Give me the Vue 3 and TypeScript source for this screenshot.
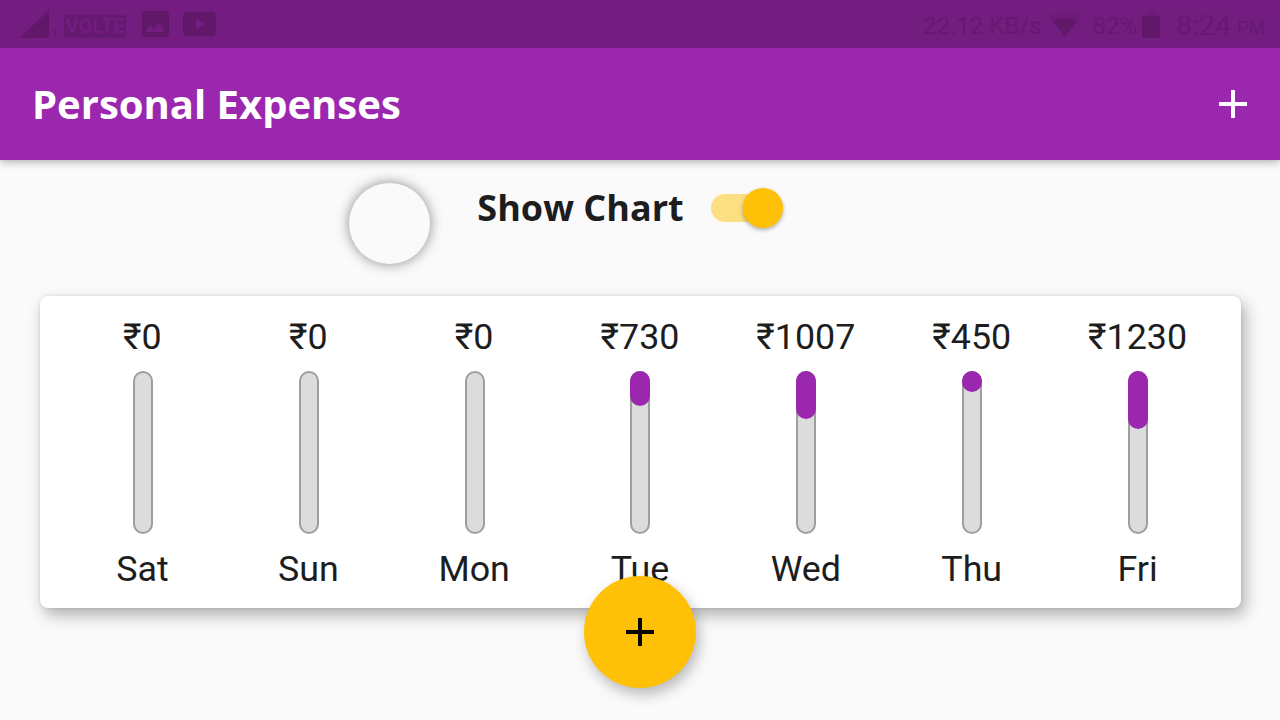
<script setup lang="ts">
import { ref } from 'vue'

interface DaySpending {
  day: string
  amount: number
  fill: number
}

const showChart = ref<boolean>(true)

const week: DaySpending[] = [
  { day: 'Sat', amount: 0, fill: 0 },
  { day: 'Sun', amount: 0, fill: 0 },
  { day: 'Mon', amount: 0, fill: 0 },
  { day: 'Tue', amount: 730, fill: 35 },
  { day: 'Wed', amount: 1007, fill: 48 },
  { day: 'Thu', amount: 450, fill: 21.5 },
  { day: 'Fri', amount: 1230, fill: 58.5 },
]
</script>

<template>
  <div class="screen">
    <div class="status">
      <div class="status-left">
        <svg class="signal" width="30" height="28" viewBox="0 0 30 28"><path d="M0 28 29 0V28Z" /></svg>
        <span class="tick"></span>
        <span class="volte">VOLTE</span>
        <svg class="photo" width="27" height="26" viewBox="0 0 27 26">
          <path fill-rule="evenodd" d="M3 0H24Q27 0 27 3V23Q27 26 24 26H3Q0 26 0 23V3Q0 0 3 0ZM3 21H23L17 11 12 18 8 14Z" />
        </svg>
        <svg class="video" width="33" height="24" viewBox="0 0 33 24">
          <path fill-rule="evenodd" d="M5 0H28Q33 0 33 5V19Q33 24 28 24H5Q0 24 0 19V5Q0 0 5 0ZM13 6V18L22 12Z" />
        </svg>
      </div>
      <div class="status-right">
        <span class="rate">22.12 KB/s</span>
        <svg class="wifi" width="32" height="26" viewBox="0 0 32 26">
          <path d="M0 6Q16-6 32 6L16 26Z" opacity=".35" />
          <path d="M4 10Q16 3 28 10L16 26Z" />
        </svg>
        <span class="percent">82%</span>
        <svg class="battery" width="18" height="27" viewBox="0 0 18 27">
          <path d="M5 0H13V4H18V27H0V4H5Z" opacity=".35" />
          <path d="M0 5H18V27H0Z" />
        </svg>
        <span class="clock">8:24</span>
        <span class="meridiem">PM</span>
      </div>
    </div>

    <header class="appbar">
      <h1>Personal Expenses</h1>
      <button class="add" aria-label="Add">
        <svg width="28" height="28" viewBox="0 0 28 28"><path d="M12 0H16V12H28V16H16V28H12V16H0V12H12Z" /></svg>
      </button>
    </header>

    <main>
      <div class="toggle-row">
        <span class="toggle-label">Show Chart</span>
        <button class="switch" aria-label="Toggle chart" @click="showChart = !showChart">
          <span class="track" :class="{ on: showChart }"><span class="thumb"></span></span>
        </button>
      </div>

      <section v-show="showChart" class="chart">
        <div v-for="d in week" :key="d.day" class="column">
          <span class="amount">₹{{ d.amount }}</span>
          <div class="bar"><div class="fill" :style="{ height: d.fill + 'px' }"></div></div>
          <span class="day">{{ d.day }}</span>
        </div>
      </section>
    </main>

    <div class="touch"></div>
    <button class="fab" aria-label="New expense">
      <svg width="28" height="28" viewBox="0 0 28 28"><path d="M12 0H16V12H28V16H16V28H12V16H0V12H12Z" /></svg>
    </button>
  </div>
</template>

<style>
body {
  margin: 0;
}
</style>

<style scoped>
.screen {
  position: relative;
  width: 1280px;
  height: 720px;
  overflow: hidden;
  display: flex;
  flex-direction: column;
  background: #fafafa;
  color: #1d1d1d;
  font-family: Roboto, "Liberation Sans", sans-serif;
}
button {
  border: 0;
  padding: 0;
  background: none;
  display: flex;
}
.status {
  height: 48px;
  flex: none;
  display: flex;
  justify-content: space-between;
  background: #731d80;
  color: #651970;
  z-index: 2;
}
.status svg {
  fill: #611869;
  flex: none;
}
.status-left,
.status-right {
  display: flex;
  align-items: center;
  line-height: 48px;
  white-space: nowrap;
}
.status-left {
  padding-left: 20px;
}
.status-right {
  padding-right: 15px;
}
.tick {
  width: 2px;
  height: 8px;
  margin: 18px 8px 0 4px;
  background: #671a73;
}
.volte {
  width: 62px;
  height: 23px;
  margin-top: 4px;
  border-radius: 3px;
  background: #651970;
  color: #731d80;
  font-size: 20px;
  font-weight: 700;
  line-height: 23px;
  text-align: center;
}
.photo {
  margin-left: 16px;
}
.video {
  margin-left: 14px;
}
.rate,
.percent {
  font-size: 24px;
  padding-top: 3px;
}
.wifi {
  margin: 0 12px 0 7px;
}
.battery {
  margin: 0 16px 0 5px;
}
.clock {
  font-size: 28.5px;
  padding-top: 3px;
}
.meridiem {
  font-size: 18.6px;
  padding: 8px 0 0 6px;
}
.appbar {
  height: 112px;
  flex: none;
  box-sizing: border-box;
  padding: 0 33.5px 0 32px;
  display: flex;
  align-items: center;
  justify-content: space-between;
  background: #9b27ae;
  box-shadow: 0 2px 8px rgba(0, 0, 0, 0.3);
  z-index: 1;
}
h1 {
  margin: 0;
  color: #fff;
  font: 700 40px/56px "Open Sans", "Noto Sans", sans-serif;
}
.add svg {
  fill: #fff;
}
.toggle-row {
  height: 96px;
  display: flex;
  align-items: center;
  justify-content: center;
}
.toggle-label {
  font: 700 36px/48px "Open Sans", "Noto Sans", sans-serif;
}
.switch {
  box-sizing: border-box;
  width: 119px;
  height: 80px;
  padding-left: 8px;
  align-items: center;
  justify-content: center;
}
.track {
  width: 72px;
  height: 28px;
  border-radius: 14px;
  display: flex;
  align-items: center;
  background: #bdbdbd;
}
.track.on {
  justify-content: flex-end;
  background: #fcdf82;
}
.thumb {
  width: 40px;
  height: 40px;
  border-radius: 50%;
  background: #ffc107;
  box-shadow: 0 2px 4px rgba(0, 0, 0, 0.3);
}
.chart {
  box-sizing: border-box;
  width: 1201px;
  height: 312px;
  margin: 40px 0 0 40px;
  padding: 20px 20px 0;
  border-radius: 8px;
  background: #fff;
  display: grid;
  grid-template-columns: repeat(7, 1fr);
  box-shadow: 4px 7px 16px rgba(0, 0, 0, 0.3), 0 0 3px rgba(0, 0, 0, 0.12);
}
.column {
  display: flex;
  flex-direction: column;
  align-items: center;
  font-size: 35.8px;
  line-height: 42px;
}
.amount,
.day {
  margin-right: 1px;
}
.bar {
  box-sizing: border-box;
  width: 20px;
  height: 163px;
  margin: 12.5px 0 14.5px;
  border: 2px solid #9e9e9e;
  border-radius: 10px;
  background: #dcdcdc;
}
.fill {
  width: 20px;
  margin: -2px 0 0 -2px;
  border-radius: 10px;
  background: #9b27ae;
}
.touch {
  position: absolute;
  left: 349px;
  top: 182.5px;
  width: 81px;
  height: 81px;
  border-radius: 50%;
  background: #fafafa;
  box-shadow: 0 0 13px rgba(0, 0, 0, 0.45);
}
.fab {
  position: absolute;
  left: 584px;
  top: 576px;
  width: 112px;
  height: 112px;
  border-radius: 50%;
  align-items: center;
  justify-content: center;
  background: #ffc107;
  box-shadow: 3px 6px 14px rgba(0, 0, 0, 0.27);
}
.fab svg {
  fill: #000;
}
</style>
